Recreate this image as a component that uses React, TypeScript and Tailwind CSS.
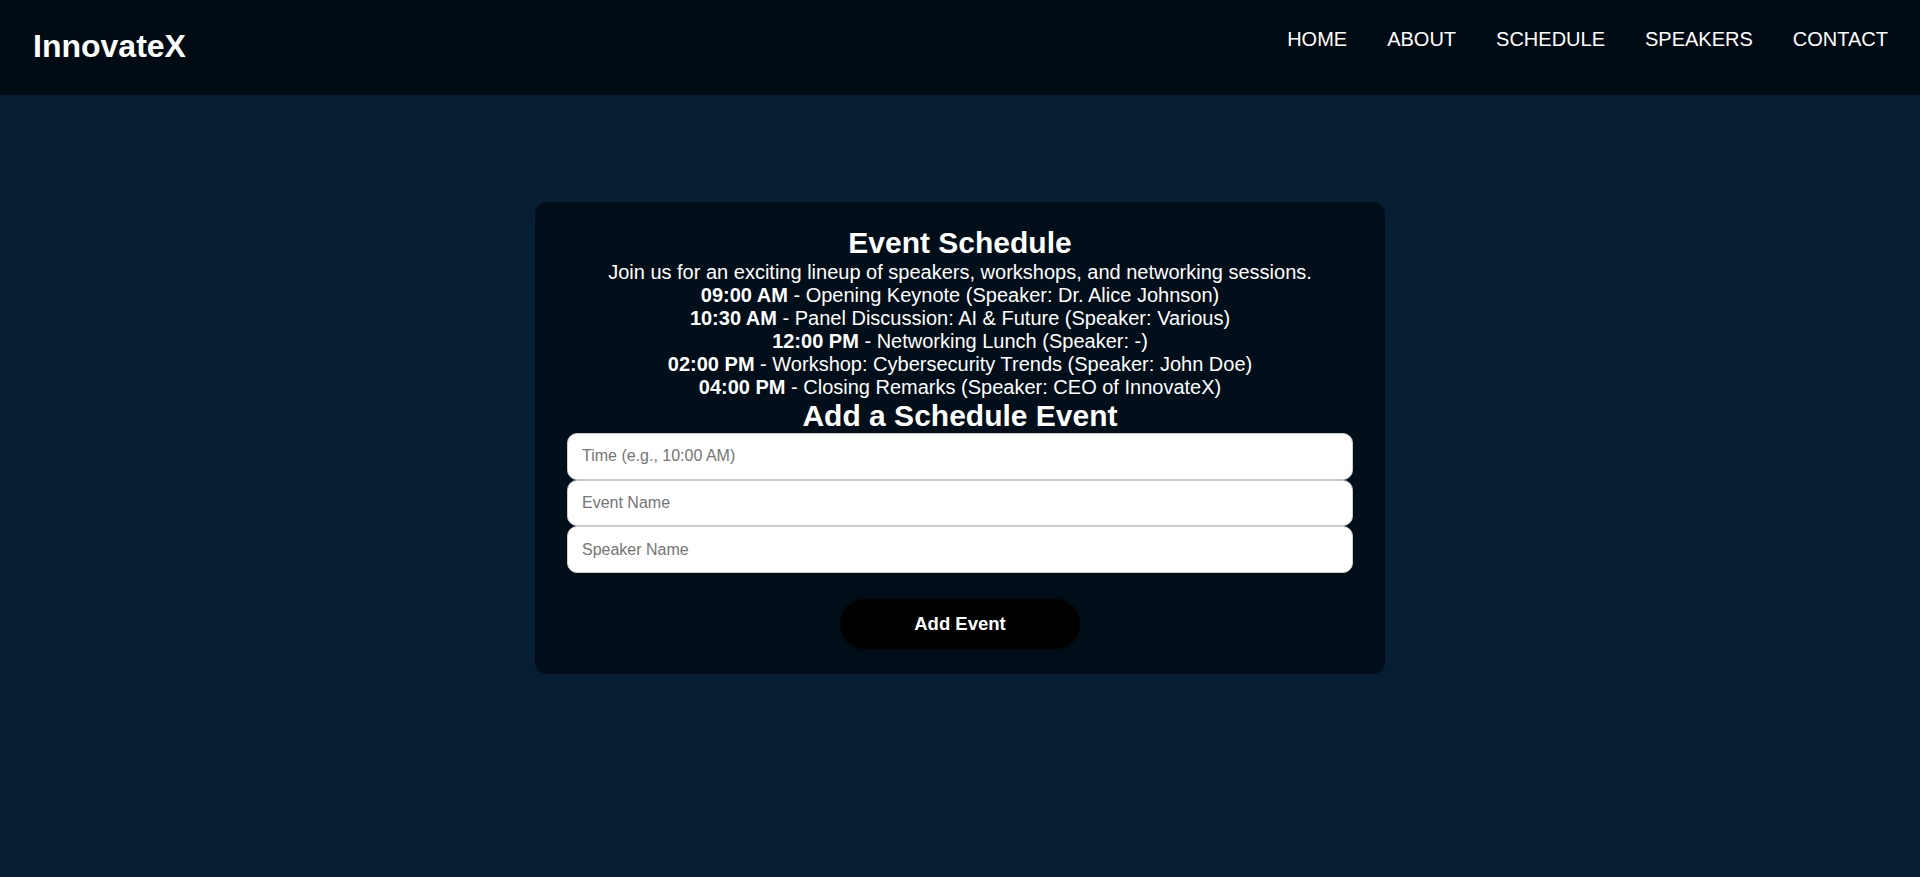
import React from "react";

const events = [
  { time: "09:00 AM", text: "Opening Keynote (Speaker: Dr. Alice Johnson)" },
  { time: "10:30 AM", text: "Panel Discussion: AI & Future (Speaker: Various)" },
  { time: "12:00 PM", text: "Networking Lunch (Speaker: -)" },
  { time: "02:00 PM", text: "Workshop: Cybersecurity Trends (Speaker: John Doe)" },
  { time: "04:00 PM", text: "Closing Remarks (Speaker: CEO of InnovateX)" },
];

export default function App() {
  return (
    <div className="min-h-screen bg-[#061d32] font-['Liberation_Sans',Arial,sans-serif] text-white">
      <header className="h-[95px] bg-[#010b14] flex justify-between items-start pt-[28px] pl-[33px] pr-[32px]">
        <div className="text-[32px] font-bold leading-[37px]">InnovateX</div>
        <nav className="flex gap-[40px] text-[20px] leading-[23px]">
          <a>HOME</a>
          <a>ABOUT</a>
          <a>SCHEDULE</a>
          <a>SPEAKERS</a>
          <a>CONTACT</a>
        </nav>
      </header>
      <main className="pt-[107px]">
        <section className="w-[850px] mx-auto bg-[#020e19] rounded-[12px] pt-[24px] pb-[25px] px-[32px] text-center">
          <h2 className="text-[30px] font-bold leading-[34.5px]">Event Schedule</h2>
          <p className="text-[20px] leading-[23px]">
            Join us for an exciting lineup of speakers, workshops, and networking sessions.
          </p>
          <div className="text-[20px] leading-[23px]">
            {events.map((e) => (
              <div key={e.time}>
                <strong className="font-bold">{e.time}</strong> - {e.text}
              </div>
            ))}
          </div>
          <h2 className="text-[30px] font-bold leading-[34.5px]">Add a Schedule Event</h2>
          <div className="flex flex-col">
            <input
              className="h-[46.67px] w-full bg-white text-black border border-[#cccccc] rounded-[10px] px-[14px] text-[16px] placeholder:text-[#757575] outline-none"
              placeholder="Time (e.g., 10:00 AM)"
            />
            <input
              className="h-[46.67px] w-full bg-white text-black border border-[#cccccc] rounded-[10px] px-[14px] text-[16px] placeholder:text-[#757575] outline-none"
              placeholder="Event Name"
            />
            <input
              className="h-[46.67px] w-full bg-white text-black border border-[#cccccc] rounded-[10px] px-[14px] text-[16px] placeholder:text-[#757575] outline-none"
              placeholder="Speaker Name"
            />
          </div>
          <button className="mt-[26px] h-[50px] w-[240px] rounded-full bg-black text-white font-bold text-[18.5px] shadow-[0_0_10px_rgba(0,0,0,0.35)]">
            Add Event
          </button>
        </section>
      </main>
    </div>
  );
}
